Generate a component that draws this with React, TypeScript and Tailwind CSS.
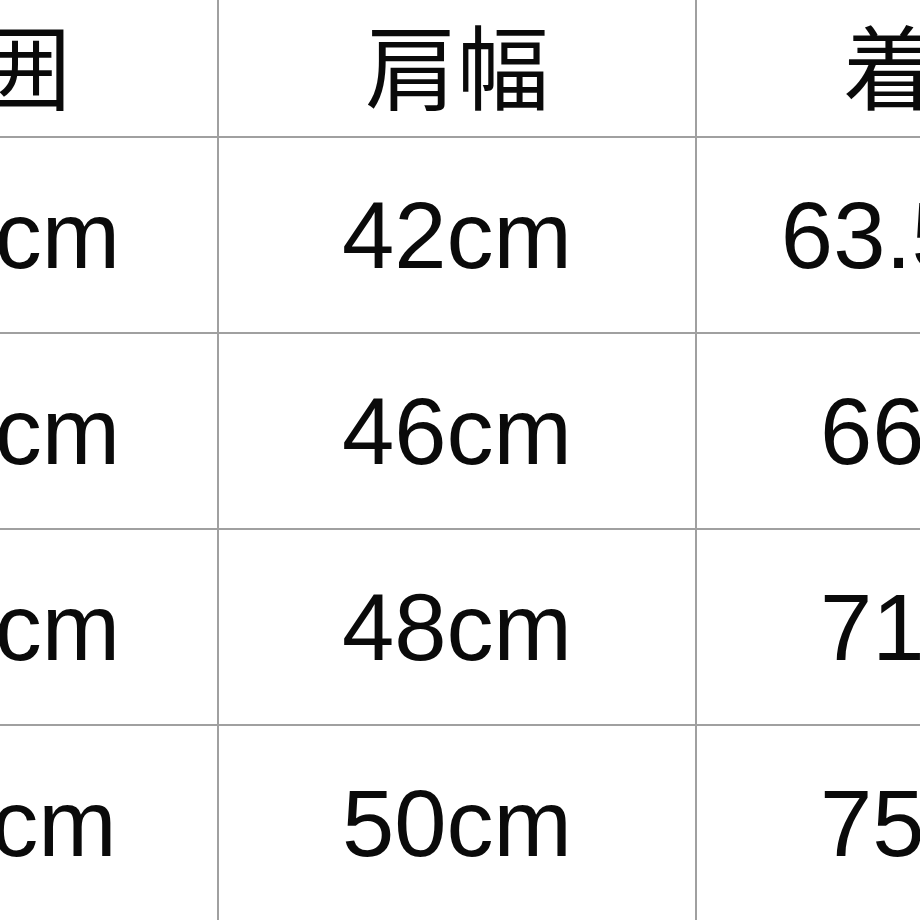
import React from "react";

const header = ["胸囲", "肩幅", "着丈"];
const rows = [
  ["100cm", "42cm", "63.5cm"],
  ["104cm", "46cm", "66cm"],
  ["108cm", "48cm", "71cm"],
  ["112cm", "50cm", "75cm"],
];

export default function App() {
  return (
    <div
      className="w-[920px] h-[920px] overflow-hidden bg-white text-[#0a0a0a]"
      style={{ fontFamily: "'Liberation Sans', 'Noto Sans CJK JP', sans-serif" }}
    >
      <div className="ml-[-259px] grid w-max grid-cols-[476px_476px_476px] gap-[2px] bg-[#a0a0a0]">
        {header.map((h) => (
          <div
            key={h}
            className="flex h-[136px] items-center justify-center bg-white pt-[6px] text-[92px] leading-none"
          >
            {h}
          </div>
        ))}
        {rows.map((r, i) =>
          r.map((c, j) => (
            <div
              key={`${i}-${j}`}
              className="flex h-[194px] items-center justify-center bg-white pt-[2px] text-[94px] leading-none"
            >
              {c}
            </div>
          ))
        )}
      </div>
    </div>
  );
}
